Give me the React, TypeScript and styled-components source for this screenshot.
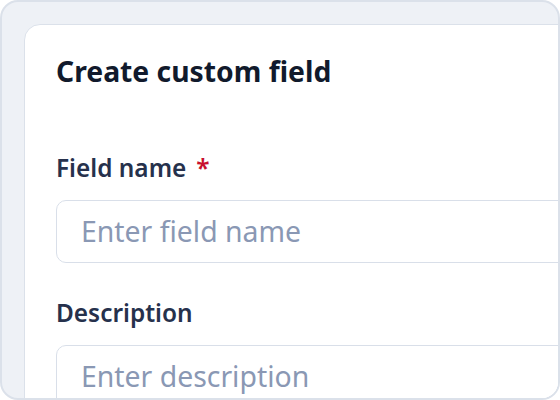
import React from "react";
import styled, { createGlobalStyle } from "styled-components";

const Global = createGlobalStyle`
  html, body { margin: 0; padding: 0; background: #ffffff; }
  body { font-family: "Noto Sans", "Open Sans", sans-serif; }
  * { box-sizing: border-box; }
`;

const Frame = styled.div`
  width: 560px;
  height: 400px;
  border: 2px solid #dbe1ea;
  border-radius: 18px;
  background: #eef1f6;
  overflow: hidden;
  padding: 22px 0 0 22px;
`;

const Card = styled.div`
  width: 640px;
  min-height: 420px;
  background: #ffffff;
  border: 1.5px solid #dbe1ea;
  border-radius: 16px;
  padding: 27.5px 32px 32px 31px;
  display: flex;
  flex-direction: column;
`;

const Title = styled.h2`
  margin: 0 0 64px;
  font-size: 28.3px;
  line-height: 36px;
  font-weight: 700;
  color: #111a2c;
`;

const Field = styled.div`
  display: flex;
  flex-direction: column;
  gap: 17px;
  margin-bottom: 35px;
`;

const Label = styled.label`
  font-size: 24.4px;
  line-height: 30px;
  font-weight: 600;
  color: #26314c;
`;

const Required = styled.span`
  color: #c8102e;
  margin-left: 10px;
`;

const Input = styled.input`
  width: 100%;
  height: 63px;
  border: 1.5px solid #d9dfe9;
  border-radius: 10px;
  padding: 0 24px;
  font-family: "Noto Sans", "Open Sans", sans-serif;
  font-size: 28.4px;
  color: #26314c;
  background: #ffffff;
  outline: none;
  &::placeholder { color: #8a98b4; }
`;

export default function App() {
  return (
    <>
      <Global />
      <Frame>
        <Card>
          <Title>Create custom field</Title>
          <Field>
            <Label>
              Field name<Required>*</Required>
            </Label>
            <Input placeholder="Enter field name" />
          </Field>
          <Field>
            <Label>Description</Label>
            <Input placeholder="Enter description" />
          </Field>
        </Card>
      </Frame>
    </>
  );
}
